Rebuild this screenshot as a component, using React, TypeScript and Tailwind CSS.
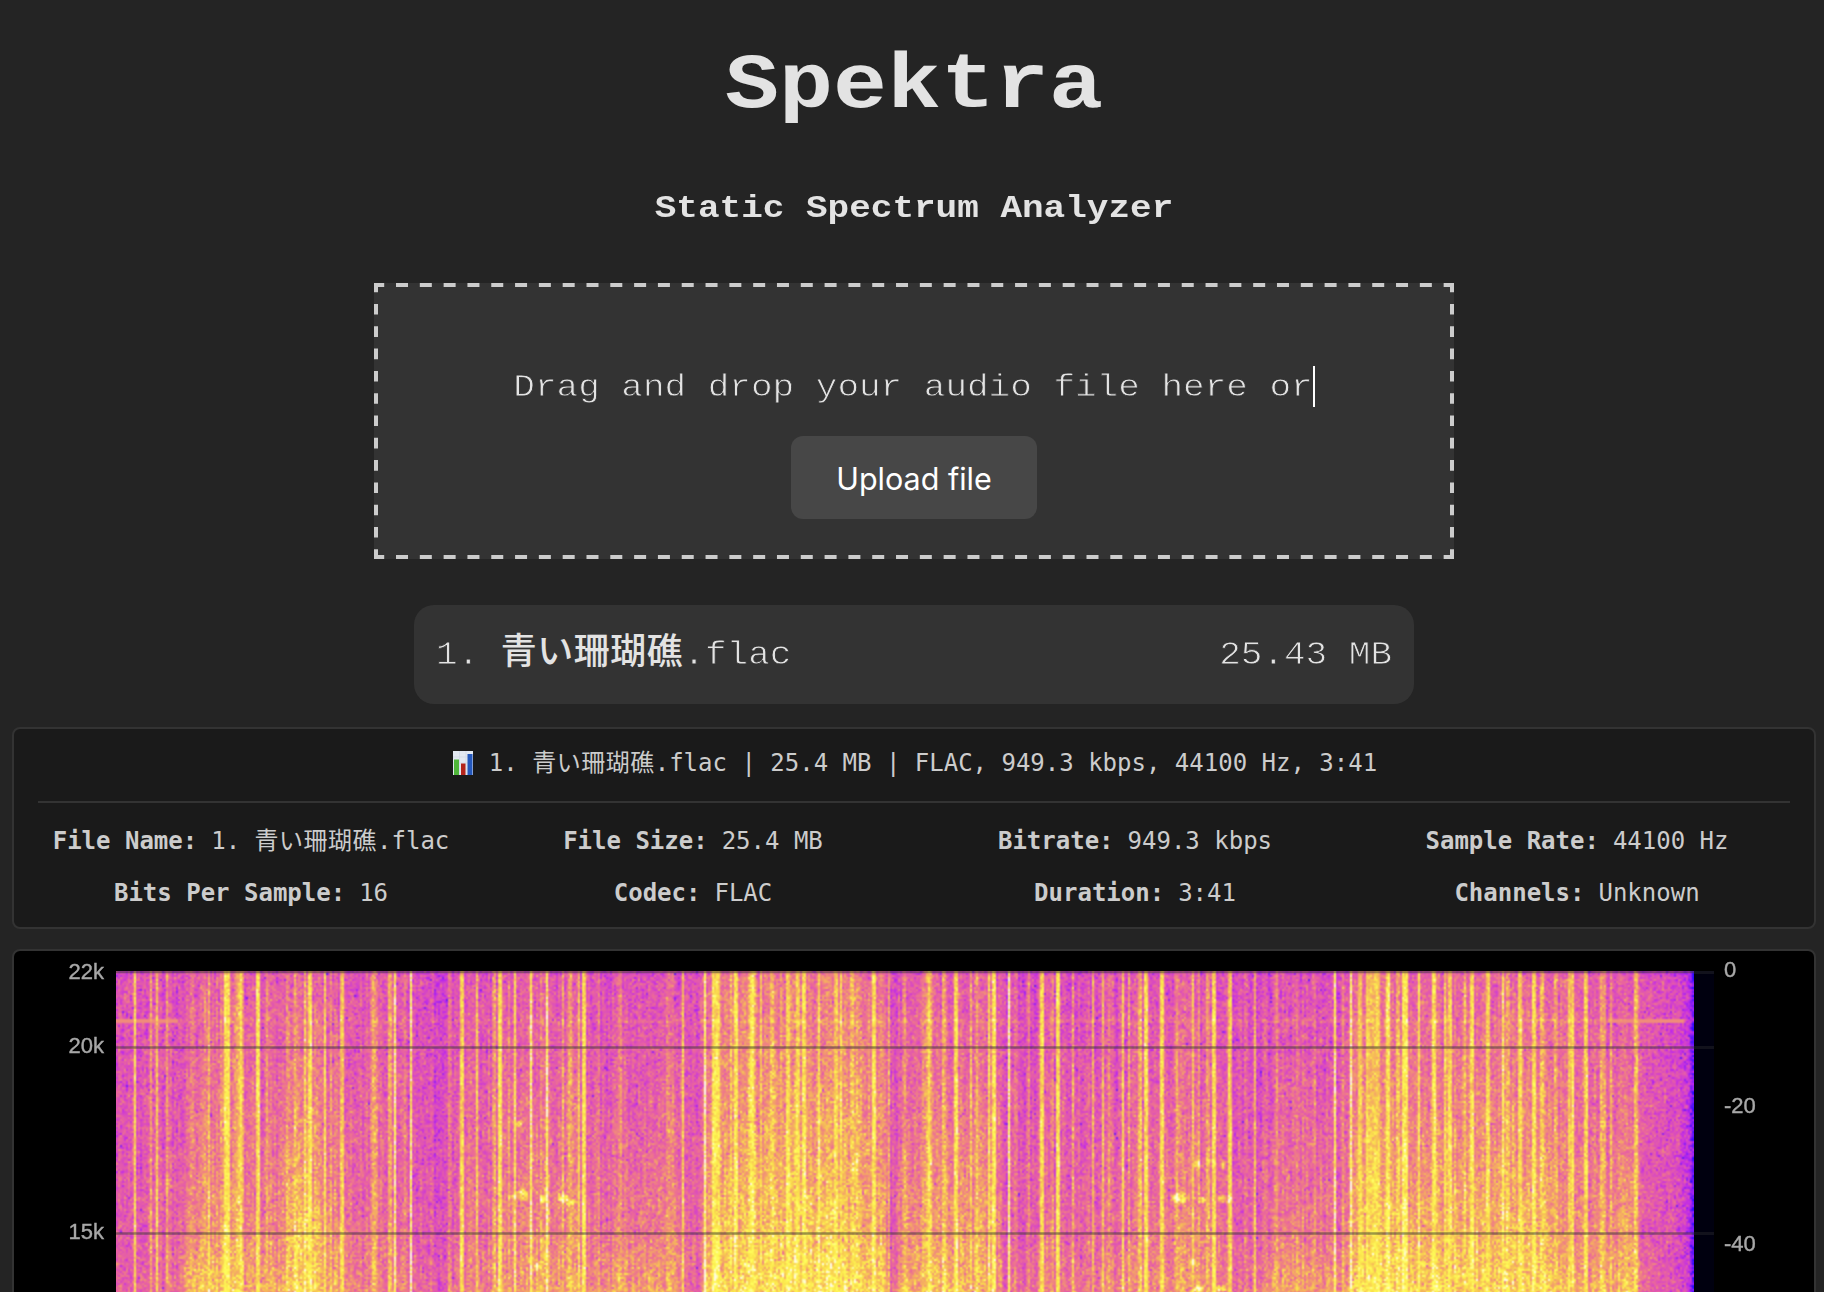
import { useLayoutEffect, useRef } from "react";

const COLS = 789;
const ROWS = 161;

// Broadband energy: [x, level at 22k, level at 15k, level at the lower edge]
const ENERGY: number[][] = [
  [0, 0.42, 0.45, 0.48], [60, 0.43, 0.5, 0.52], [70, 0.48, 0.62, 0.75], [110, 0.5, 0.68, 0.78],
  [135, 0.46, 0.6, 0.7], [160, 0.46, 0.6, 0.72], [180, 0.54, 0.8, 0.86], [195, 0.52, 0.8, 0.85],
  [215, 0.5, 0.65, 0.75], [240, 0.44, 0.54, 0.6], [270, 0.46, 0.52, 0.57], [300, 0.41, 0.47, 0.52],
  [320, 0.39, 0.44, 0.5], [345, 0.44, 0.52, 0.57], [400, 0.46, 0.6, 0.67], [460, 0.46, 0.62, 0.68],
  [475, 0.41, 0.52, 0.62], [525, 0.42, 0.58, 0.7], [560, 0.45, 0.62, 0.7], [572, 0.44, 0.5, 0.55],
  [585, 0.44, 0.5, 0.5], [588, 0.58, 0.75, 0.83], [640, 0.57, 0.76, 0.85], [700, 0.56, 0.8, 0.85],
  [770, 0.54, 0.72, 0.8], [775, 0.38, 0.4, 0.48], [785, 0.48, 0.65, 0.72], [850, 0.49, 0.68, 0.78],
  [880, 0.49, 0.68, 0.7], [888, 0.41, 0.44, 0.52], [925, 0.43, 0.52, 0.57], [1000, 0.43, 0.52, 0.6],
  [1045, 0.46, 0.6, 0.65], [1100, 0.46, 0.6, 0.65], [1125, 0.43, 0.49, 0.56], [1170, 0.43, 0.58, 0.7],
  [1225, 0.43, 0.56, 0.64], [1243, 0.54, 0.75, 0.85], [1430, 0.51, 0.75, 0.82], [1450, 0.48, 0.6, 0.7],
  [1475, 0.46, 0.6, 0.7], [1500, 0.46, 0.65, 0.75], [1518, 0.46, 0.7, 0.8], [1524, 0.45, 0.48, 0.52],
  [1560, 0.39, 0.43, 0.45], [1572, 0.3, 0.32, 0.34], [1577, 0.1, 0.1, 0.12],
];

// Transients: [x, width, strength]
const HITS: number[][] = [
  [19, 2, 0.87], [35, 2, 0.6], [41, 2, 0.75], [51, 2, 0.5], [77, 2, 0.25], [89, 2, 0.35], [93, 2, 0.5],
  [105, 2, 0.4], [111, 4, 0.85], [120, 2, 0.4], [125, 3, 0.9], [142, 4, 0.88], [151, 2, 0.5], [171, 2, 0.4],
  [179, 2, 0.4], [189, 2, 0.6], [194, 3, 0.8], [209, 2, 0.85], [215, 2, 0.4], [226, 3, 0.7], [258, 5, 0.5],
  [274, 2, 0.6], [279, 2, 0.95], [289, 2, 0.4], [295, 2, 0.95], [334, 2, 0.25], [346, 3, 0.8], [353, 2, 0.3],
  [361, 2, 0.65], [378, 2, 0.5], [384, 3, 0.87], [393, 2, 0.4], [399, 2, 0.85], [415, 2, 0.96], [425, 2, 0.35],
  [431, 2, 0.95], [447, 2, 0.5], [454, 3, 0.55], [463, 2, 0.7], [468, 3, 0.85], [483, 2, 0.3], [504, 2, 0.4],
  [552, 2, 0.3], [557, 2, 0.2], [567, 2, 0.8], [589, 2, 0.94], [599, 4, 0.75], [603, 2, 0.75], [615, 2, 0.5],
  [620, 3, 0.87], [636, 5, 0.87], [645, 2, 0.65], [656, 2, 0.6], [665, 2, 0.4], [672, 3, 0.7], [682, 2, 0.7],
  [688, 3, 0.87], [703, 2, 0.8], [720, 2, 0.7], [725, 2, 0.85], [736, 2, 0.6], [741, 2, 0.4], [758, 3, 0.87],
  [773, 2, 0.6], [788, 2, 0.3], [808, 2, 0.3], [813, 3, 0.87], [828, 3, 0.4], [840, 4, 0.8], [855, 2, 0.5],
  [861, 2, 0.5], [873, 2, 0.8], [878, 3, 0.87], [893, 2, 0.95], [900, 2, 0.3], [913, 2, 0.45], [926, 4, 0.85],
  [936, 2, 0.35], [942, 3, 0.87], [957, 2, 0.55], [963, 2, 0.2], [977, 2, 0.65], [987, 2, 0.7], [993, 2, 0.3],
  [1007, 2, 0.85], [1013, 2, 0.6], [1024, 2, 0.6], [1030, 4, 0.87], [1046, 3, 0.87], [1061, 2, 0.5],
  [1067, 2, 0.3], [1077, 2, 0.75], [1083, 2, 0.4], [1092, 2, 0.3], [1098, 3, 0.85], [1114, 4, 0.8],
  [1129, 2, 0.3], [1139, 2, 0.65], [1161, 2, 0.5], [1181, 2, 0.2], [1199, 2, 0.3], [1219, 2, 0.95],
  [1227, 2, 0.25], [1235, 2, 0.98], [1244, 4, 0.7], [1257, 12, 0.65], [1272, 3, 0.88], [1282, 2, 0.4],
  [1289, 4, 0.87], [1303, 2, 0.85], [1318, 2, 0.85], [1329, 2, 0.65], [1334, 3, 0.75], [1349, 2, 0.6],
  [1356, 3, 0.8], [1372, 4, 0.8], [1387, 2, 0.87], [1392, 2, 0.4], [1404, 3, 0.75], [1418, 4, 0.78],
  [1426, 2, 0.6], [1440, 2, 0.5], [1454, 2, 0.7], [1457, 2, 0.9], [1470, 2, 0.75], [1487, 6, 0.5],
  [1495, 2, 0.5], [1520, 3, 0.6],
];

// Short bright bursts: [x, y, radius x, radius y]
const BURSTS: number[][] = [
  [406, 223, 6, 6], [396, 225, 4, 3], [447, 226, 5, 5], [427, 227, 4, 4], [422, 295, 5, 4], [455, 230, 7, 3],
  [1063, 226, 9, 6], [1108, 227, 8, 4], [1086, 228, 5, 4], [1081, 192, 4, 4], [1107, 193, 4, 4],
  [1083, 317, 6, 4], [1106, 316, 6, 4], [1077, 290, 3, 4], [403, 152, 4, 4],
];

const STOPS: number[][] = [
  [0, 40, 10, 250], [0.15, 140, 30, 245], [0.25, 190, 40, 236], [0.4, 220, 78, 188], [0.52, 235, 103, 155],
  [0.64, 241, 142, 120], [0.75, 246, 186, 88], [0.84, 252, 230, 76], [0.93, 255, 255, 92], [1, 255, 250, 235],
];

function shade(v: number): number[] {
  const t = Math.max(0, Math.min(1, v));
  for (let i = 1; i < STOPS.length; i++) {
    const a = STOPS[i - 1];
    const b = STOPS[i];
    if (t <= b[0]) {
      const k = (t - a[0]) / (b[0] - a[0]);
      return [1, 2, 3].map((c) => a[c] + (b[c] - a[c]) * k);
    }
  }
  return [255, 250, 235];
}

function makeRandom(seed: number) {
  let s = seed;
  return () => {
    s = (s + 0x6d2b79f5) | 0;
    let t = Math.imul(s ^ (s >>> 15), 1 | s);
    t = (t + Math.imul(t ^ (t >>> 7), 61 | t)) ^ t;
    return ((t ^ (t >>> 14)) >>> 0) / 4294967296;
  };
}

function paint(ctx: CanvasRenderingContext2D) {
  const random = makeRandom(4411);
  const image = ctx.createImageData(COLS, ROWS);
  for (let cx = 0; cx < COLS; cx++) {
    const x = cx * 2 + 1;
    let i = 1;
    while (i < ENERGY.length - 1 && ENERGY[i][0] < x) i++;
    const a = ENERGY[i - 1];
    const b = ENERGY[i];
    const k = Math.min(1, (x - a[0]) / (b[0] - a[0]));
    const level = [1, 2, 3].map((n) => a[n] + (b[n] - a[n]) * k);
    const drift = x > 1524 ? 0 : (random() - 0.5) * 0.13;
    let hit = 0;
    for (const [hx, w, s] of HITS) {
      const d = Math.abs(x - hx);
      const reach = w / 2 + 1;
      if (d < reach) hit = Math.max(hit, s * (d <= w / 2 ? 1 : 1 - (d - w / 2) * 0.75));
    }
    let glow = 0;
    for (let cy = 0; cy < ROWS; cy++) {
      const y = cy * 2;
      let v =
        y < 262
          ? level[0] + (level[1] - level[0]) * Math.pow(y / 262, 1.25)
          : level[1] + (level[2] - level[1]) * ((y - 262) / 60);
      v += drift;
      v += (0.92 - v) * hit * 0.92;
      glow = glow * 0.85 + (random() - 0.5) * 0.05;
      v += glow;
      if (hit > 0.93) v += 0.05;
      v += (random() + random() + random() - 1.5) * (hit > 0.6 ? 0.1 : 0.145);
      if (random() < 0.03 && hit < 0.5) v -= 0.15;
      if (y >= 48 && y <= 51) {
        if (x < 62 || (x > 1495 && x < 1568)) v = Math.max(v, 0.63);
        else v += 0.05;
      }
      for (const [bx, by, rx, ry] of BURSTS) {
        const q = ((x - bx) / rx) ** 2 + ((y - by) / ry) ** 2;
        if (q < 1) v += 0.28 * (1 - q * 0.6);
      }
      if (y < 4) v -= 0.06;
      const [r, g, bl] = shade(v);
      const p = (cy * COLS + cx) * 4;
      image.data[p] = r;
      image.data[p + 1] = g;
      image.data[p + 2] = bl;
      image.data[p + 3] = 255;
    }
  }
  ctx.putImageData(image, 0, 0);
}

function Spectrogram() {
  const ref = useRef<HTMLCanvasElement>(null);
  useLayoutEffect(() => {
    const ctx = ref.current?.getContext("2d");
    if (ctx) paint(ctx);
  }, []);
  return (
    <div className="relative mt-5 flex h-[322px] w-[1598px] shrink-0 bg-[#00000f]">
      <canvas ref={ref} width={COLS} height={ROWS} className="h-[322px] w-[1578px]" />
      <svg className="absolute inset-0" width="1598" height="322" fill="none">
        <path d="M0 1H1578M0 76.5H1578M0 262.5H1578" stroke="#303030" strokeOpacity="0.48" strokeWidth="2.4" />
        <path d="M1578 1.5H1598M1578 76.5H1598M1578 262.5H1598" stroke="#12121c" strokeWidth="3" />
      </svg>
    </div>
  );
}

function ChartIcon() {
  return (
    <svg width="24" height="24" viewBox="0 0 24 24" className="shrink-0">
      <rect x="2" y="0" width="20" height="24" fill="#e3e9f2" />
      <path d="M2 6H22M2 12H22M2 18H22M8.500 0V24M15 0V24" stroke="#cfd8e6" strokeWidth="0.7" />
      <rect x="3" y="8.500" width="5" height="15.500" fill="#4fb53a" />
      <rect x="10" y="12.500" width="4.500" height="11.500" fill="#b3241c" />
      <rect x="16.500" y="3" width="5" height="21" fill="#2458bd" />
    </svg>
  );
}

function DashedFrame() {
  return (
    <svg className="absolute inset-0" width="1080" height="276" fill="none" stroke="#cccccc" strokeWidth="4">
      <path d="M0 2H1080M0 274H1080" strokeDasharray="12 11.81" strokeDashoffset="1.8" />
      <path d="M2 0V276M1078 0V276" strokeDasharray="10.6 11.7" strokeDashoffset="1.3" />
    </svg>
  );
}

function FileName() {
  return (
    <>
      1. <span className="tracking-[0.5px]">青い珊瑚礁</span>.flac
    </>
  );
}

const DETAILS: [string, React.ReactNode][] = [
  ["File Name:", <FileName />],
  ["File Size:", "25.4 MB"],
  ["Bitrate:", "949.3 kbps"],
  ["Sample Rate:", "44100 Hz"],
  ["Bits Per Sample:", "16"],
  ["Codec:", "FLAC"],
  ["Duration:", "3:41"],
  ["Channels:", "Unknown"],
];

export default function App() {
  return (
    <div className="flex h-[1292px] w-[1824px] flex-col overflow-hidden bg-[#242424] pr-2 pl-3 font-['Courier_New','Liberation_Mono','Noto_Sans_CJK_JP',monospace] text-[#e3e3e3]">
      <header className="flex flex-col items-center pt-[33px]">
        <h1 className="origin-[50%_74%] scale-y-[0.87] text-[90px] leading-[100px] font-bold">Spektra</h1>
        <h2 className="mt-[55px] origin-[50%_74%] scale-y-[0.88] text-[36px] leading-10 font-bold">
          Static Spectrum Analyzer
        </h2>
      </header>

      <section className="relative mt-[55px] flex h-[276px] w-[1080px] shrink-0 flex-col items-center self-center bg-[#333333] pt-[83px]">
        <DashedFrame />
        <p className="flex h-[41px] border-r-2 border-white text-[36px] leading-[41px] whitespace-pre">
          <span className="origin-[50%_74%] scale-y-[0.88] [-webkit-text-stroke:0.9px_#333333]">
            Drag and drop your audio file here or
          </span>
        </p>
        <button className="mt-[29px] h-[83px] w-[246px] rounded-xl bg-[#474747] pt-[2px] font-['Inter',sans-serif] text-[30.5px] text-white">
          Upload file
        </button>
      </section>

      <section className="mt-[46px] flex h-[99px] w-[1000px] shrink-0 items-center justify-between self-center rounded-[20px] bg-[#333333] px-[22px] pt-px text-[36px] leading-10">
        <div className="flex whitespace-pre">
          <span className="origin-[50%_74%] scale-y-[0.9] [-webkit-text-stroke:0.9px_#333333]">1. </span>
          <span className="font-medium tracking-[0.5px]">青い珊瑚礁</span>
          <span className="origin-[50%_74%] scale-y-[0.9] [-webkit-text-stroke:0.9px_#333333]">.flac</span>
        </div>
        <span className="origin-[50%_74%] scale-y-[0.94] [-webkit-text-stroke:0.9px_#333333]">25.43 MB</span>
      </section>

      <section className="mt-[23px] h-[202px] shrink-0 rounded-lg border-2 border-[#333333] bg-[#1a1a1a] px-6 font-['DejaVu_Sans_Mono','Noto_Sans_CJK_JP',monospace] text-[24px] leading-9 text-[#cccccc]">
        <div className="flex h-[74px] items-center justify-center gap-[14px] border-b-2 border-[#333333] pb-1">
          <ChartIcon />
          <span>
            <FileName /> | 25.4 MB | FLAC, 949.3 kbps, 44100 Hz, 3:41
          </span>
        </div>
        <dl className="mt-5 grid grid-cols-4 gap-4">
          {DETAILS.map(([label, value]) => (
            <div key={label} className="flex h-9 justify-center gap-[14px] whitespace-nowrap">
              <dt className="font-bold">{label}</dt>
              <dd>{value}</dd>
            </div>
          ))}
        </dl>
      </section>

      <section className="mt-5 flex h-[600px] shrink-0 overflow-hidden rounded-lg border-2 border-[#333333] bg-black font-['Liberation_Sans',sans-serif] text-[22px] leading-6 text-[#a8a8a8]">
        <div className="flex w-[102px] flex-col items-end pt-[9px] pr-[12px] blur-[0.7px] [-webkit-text-stroke:0.4px_#a8a8a8]">
          <span>22k</span>
          <span className="mt-[50px]">20k</span>
          <span className="mt-[162px]">15k</span>
        </div>
        <Spectrogram />
        <div className="flex flex-col pt-[7px] pl-[10px] blur-[0.7px] [-webkit-text-stroke:0.4px_#a8a8a8]">
          <span>0</span>
          <span className="mt-[112px]">-20</span>
          <span className="mt-[114px]">-40</span>
        </div>
      </section>
    </div>
  );
}
